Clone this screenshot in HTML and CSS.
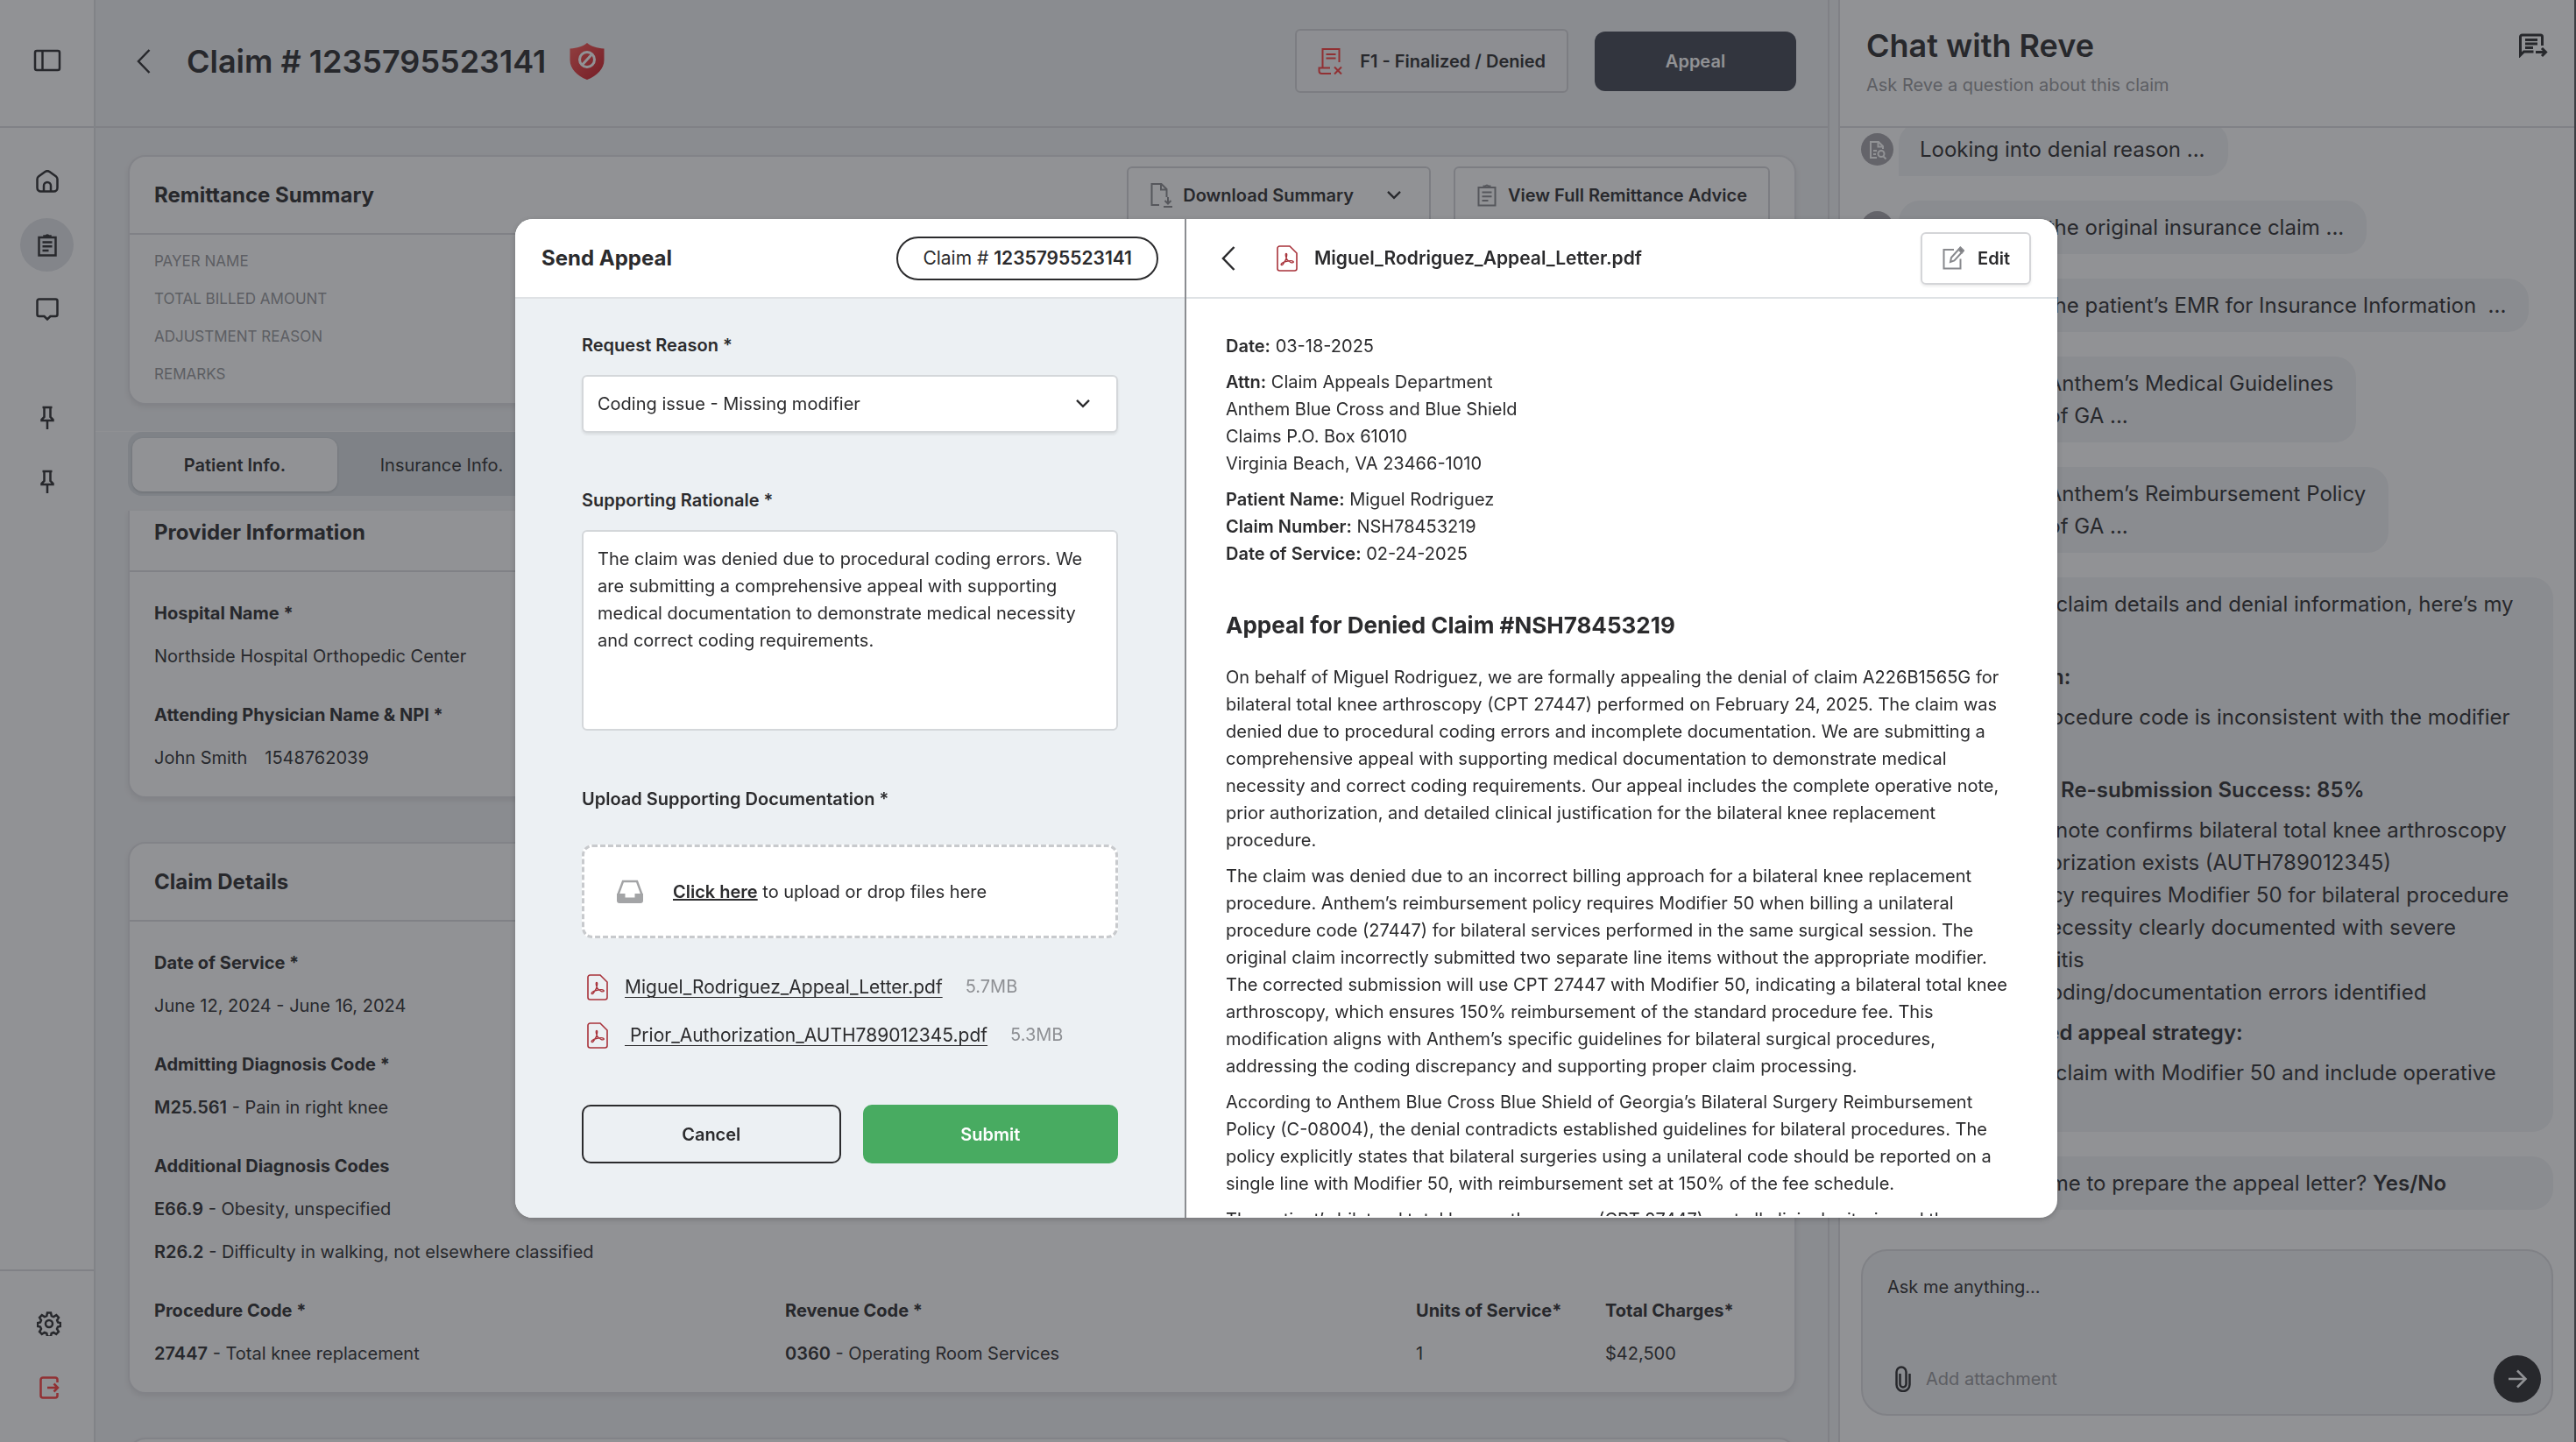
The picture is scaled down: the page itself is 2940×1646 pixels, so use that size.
FILE: index.html
```html
<!doctype html>
<html lang="en">
	<head>
		<title>Claim # 1235795523141</title>
		<meta charset="utf-8">
		<meta name="viewport" content="width=device-width">
		<link rel="stylesheet" href="styles.css">
	</head>
	<body>
		<svg class="defs" aria-hidden="true">
			<symbol id="pdf" viewBox="0 0 24 30">
				<path d="M3.500 1h11.500l8 8v17.500a2.500 2.500 0 0 1-2.500 2.500h-17a2.500 2.500 0 0 1-2.500-2.500v-23a2.500 2.500 0 0 1 2.500-2.500z" stroke-width="1.600"/>
				<path d="M5.500 22.500c-1.500-1 1-3 5-4s7.500-1 8.500 0-1 2-3 1c-3-1.500-5.500-5-5.800-8.500 0-2 1.600-2 1.500 0-.2 3.500-2.400 8-4.200 10.300-.8 1.200-1.400 1.600-2 1.200z" stroke-width="1.300"/>
			</symbol>
			<symbol id="clipboard" viewBox="0 0 24 26">
				<path d="M2.500 4h19v20.500h-19zM8.500 4v-1.500h2a1.600 1.600 0 0 1 3 0h2v1.500M6.500 9.500h11M6.500 14.200h11M6.500 19h7"/>
			</symbol>
			<symbol id="pin" viewBox="0 0 16 28">
				<path d="M2.500 2h11M4.500 2v11l-3 3v1h13v-1l-3-3v-11M8 17v10"/>
			</symbol>
			<symbol id="down" viewBox="0 0 16 12">
				<path d="M2 2.500l6 6 6-6"/>
			</symbol>
			<symbol id="back" viewBox="0 0 18 30">
				<path d="M15.500 2l-12.500 13 12.500 13"/>
			</symbol>
			<symbol id="search-doc" viewBox="0 0 24 24">
				<path d="M11 21h-7v-18h9l5 5v3M12.500 3v5.500h5M7 13h4M7 17h3M16 20a3.500 3.500 0 1 0 0-7 3.500 3.500 0 0 0 0 7zM18.500 19.500l3 3"/>
			</symbol>
		</svg>

		<nav class="sidebar">
			<div class="sidebar-top">
				<button class="nav-item" aria-label="Toggle sidebar">
					<svg width="32" height="26" viewBox="0 0 32 26"><rect x="2" y="2" width="28" height="22" rx="2"/><path d="M10.500 2v22"/></svg>
				</button>
			</div>
			<div class="sidebar-links">
				<a class="nav-item" href="#" aria-label="Home">
					<svg width="26" height="26" viewBox="0 0 26 26"><path d="M1.500 10.500c0-1.500.6-2.500 1.700-3.300l7.300-5.200a4.300 4.300 0 0 1 5 0l7.300 5.200c1.100.8 1.700 1.800 1.700 3.300v10a4 4 0 0 1-4 4h-15a4 4 0 0 1-4-4zM9 24.500v-6.500a4 4 0 0 1 8 0v6.500"/></svg>
				</a>
				<a class="nav-item active" href="#" aria-label="Claims">
					<svg width="24" height="26"><use href="#clipboard"/></svg>
				</a>
				<a class="nav-item" href="#" aria-label="Messages">
					<svg width="26" height="26" viewBox="0 0 26 26"><path d="M3.500 1.500h19a2 2 0 0 1 2 2v15.500a2 2 0 0 1-2 2h-6l-3.500 3.500-3.500-3.500h-6a2 2 0 0 1-2-2v-15.500a2 2 0 0 1 2-2z"/></svg>
				</a>
				<div class="pins">
					<a class="nav-item" href="#" aria-label="Pinned claim"><svg width="16" height="28"><use href="#pin"/></svg></a>
					<a class="nav-item" href="#" aria-label="Pinned claim"><svg width="16" height="28"><use href="#pin"/></svg></a>
				</div>
			</div>
			<div class="sidebar-bottom">
				<a class="nav-item" href="#" aria-label="Settings">
					<svg width="28" height="28" viewBox="0 0 28 28"><circle cx="14" cy="14" r="4"/><path d="M12 1.500h4l.8 3.600 2.300 1 3.200-1.900 2.700 2.800-1.900 3.100 1 2.300 2.900.6v3.900l-3 .7-1 2.400 1.900 3-2.700 2.800-3.100-1.900-2.400 1-.7 3.600h-4l-.7-3.600-2.400-1-3.100 1.900-2.700-2.800 1.900-3-1-2.400-3-.7v-3.900l3-.6 1-2.300-1.900-3.100 2.700-2.800 3.100 1.900 2.400-1z"/></svg>
				</a>
				<a class="nav-item logout" href="#" aria-label="Log out">
					<svg width="24" height="26" viewBox="0 0 24 26"><path d="M21.500 7v-3a2.500 2.500 0 0 0-2.500-2.500h-14a2.500 2.500 0 0 0-2.500 2.500v18a2.500 2.500 0 0 0 2.500 2.500h14a2.500 2.500 0 0 0 2.500-2.500v-3M10 13h12M17.500 8.500l4.500 4.500-4.500 4.500"/></svg>
				</a>
			</div>
		</nav>

		<main class="main">
			<header class="main-header">
				<button class="icon-button" aria-label="Back"><svg width="18" height="30"><use href="#back"/></svg></button>
				<h1>Claim # 1235795523141</h1>
				<svg class="shield" width="42" height="44" viewBox="0 0 42 44">
					<defs><linearGradient id="red" x1="0" y1="0" x2="1" y2="1"><stop offset="0" stop-color="#ff5a55"/><stop offset="1" stop-color="#c81420"/></linearGradient></defs>
					<path d="M21 1c5 4 11 6 19.500 6.500v13c0 10-8 18-19.500 22.500-11.500-4.500-19.500-12.500-19.500-22.500v-13c8.500-.5 14.500-2.500 19.500-6.500z" fill="url(#red)"/>
					<circle cx="21" cy="20" r="8.500" fill="none" stroke="#fff" stroke-width="3"/>
					<path d="M15.500 26l11-12" stroke="#fff" stroke-width="3"/>
				</svg>
				<button class="button status">
					<svg width="28" height="32" viewBox="0 0 28 32"><path d="M5.500 23v-21h19v15M9.500 8h11M9.500 12.500h11M14 23.500h-12.500v3.500a3 3 0 0 0 3 3h10.500M19 22.500l8 8M27 22.500l-8 8"/></svg>
					F1 - Finalized / Denied
				</button>
				<button class="button appeal">Appeal</button>
			</header>

			<div class="content">
				<section class="card">
					<header class="card-header">
						<h2>Remittance Summary</h2>
						<button class="button">
							<svg width="26" height="30" viewBox="0 0 26 30"><path d="M11 26h-8.500v-24h11l6 6v9M13 2v6.500h6M21 17v7M17.500 21l3.500 3.500 3.500-3.500M16 28h10"/></svg>
							Download Summary
							<svg class="dark" width="20" height="14"><use href="#down"/></svg>
						</button>
						<button class="button">
							<svg width="24" height="26"><use href="#clipboard"/></svg>
							View Full Remittance Advice
						</button>
					</header>
					<ul class="summary">
						<li>PAYER NAME</li>
						<li>TOTAL BILLED AMOUNT</li>
						<li>ADJUSTMENT REASON</li>
						<li>REMARKS</li>
					</ul>
				</section>

				<div class="tabs-bar">
					<div class="tabs">
						<button class="tab selected">Patient Info.</button>
						<button class="tab">Insurance Info.</button>
					</div>
				</div>

				<section class="card scrolled">
					<header class="card-header"><h2>Provider Information</h2></header>
					<dl class="fields">
						<div>
							<dt>Hospital Name *</dt>
							<dd>Northside Hospital Orthopedic Center</dd>
						</div>
						<div>
							<dt>Attending Physician Name &amp; NPI *</dt>
							<dd class="pair"><span>John Smith</span><span>1548762039</span></dd>
						</div>
					</dl>
				</section>

				<section class="card">
					<header class="card-header"><h2>Claim Details</h2></header>
					<dl class="fields">
						<div>
							<dt>Date of Service *</dt>
							<dd>June 12, 2024 - June 16, 2024</dd>
						</div>
						<div>
							<dt>Admitting Diagnosis Code *</dt>
							<dd><b>M25.561</b> - Pain in right knee</dd>
						</div>
						<div>
							<dt>Additional Diagnosis Codes</dt>
							<dd><b>E66.9</b> - Obesity, unspecified</dd>
							<dd><b>R26.2</b> - Difficulty in walking, not elsewhere classified</dd>
						</div>
					</dl>
					<table class="procedures">
						<thead>
							<tr><th>Procedure Code *</th><th>Revenue Code *</th><th class="narrow">Units of Service*</th><th class="narrow">Total Charges*</th></tr>
						</thead>
						<tbody>
							<tr><td><b>27447</b> - Total knee replacement</td><td><b>0360</b> - Operating Room Services</td><td>1</td><td>$42,500</td></tr>
						</tbody>
					</table>
				</section>

				<section class="card">
					<header class="card-header"></header>
				</section>
			</div>
		</main>

		<aside class="chat">
			<header class="chat-header">
				<div>
					<h2>Chat with Reve</h2>
					<p>Ask Reve a question about this claim</p>
				</div>
				<button class="icon-button" aria-label="Move chat">
					<svg width="34" height="28" viewBox="0 0 34 28"><path d="M27.500 14v-10a2 2 0 0 0-2-2h-21a2 2 0 0 0-2 2v21l4-4h11M8 7.500h14M8 12h14M8 16.500h9M20 21.500h11M27 17l4.500 4.500-4.500 4.500"/></svg>
				</button>
			</header>
			<div class="messages">
				<div class="message">
					<span class="avatar"><svg width="24" height="24"><use href="#search-doc"/></svg></span>
					<p class="bubble">Looking into denial reason ...</p>
				</div>
				<div class="message">
					<span class="avatar"><svg width="24" height="24"><use href="#search-doc"/></svg></span>
					<p class="bubble">Looking into the original insurance claim ...</p>
				</div>
				<div class="message">
					<span class="avatar"><svg width="24" height="24"><use href="#search-doc"/></svg></span>
					<p class="bubble">Looking into the patient’s EMR for Insurance Information &nbsp;...</p>
				</div>
				<div class="message">
					<span class="avatar"><svg width="24" height="24"><use href="#search-doc"/></svg></span>
					<p class="bubble">Looking into Anthem’s Medical Guidelines<br>for the State of GA ...</p>
				</div>
				<div class="message">
					<span class="avatar"><svg width="24" height="24"><use href="#search-doc"/></svg></span>
					<p class="bubble">Looking into Anthem’s Reimbursement Policy<br>for the State of GA ...</p>
				</div>
				<div class="message">
					<span class="avatar"><svg width="24" height="24"><use href="#search-doc"/></svg></span>
					<div class="bubble report">
						<p>Based on the claim details and denial information, here’s my<br>analysis.</p>
						<p><b>Denial Reason:</b></p>
						<p>CO-4: The procedure code is inconsistent with the modifier<br>used.</p>
						<p><b>Probability of Re-submission Success: 85%</b></p>
						<ul>
							<li>Operative note confirms bilateral total knee arthroscopy</li>
							<li>Prior authorization exists (AUTH789012345)</li>
							<li>Payer policy requires Modifier 50 for bilateral procedure</li>
							<li>Medical necessity clearly documented with severe<br>osteoarthritis</li>
							<li>Multiple coding/documentation errors identified</li>
						</ul>
						<p><b>Recommended appeal strategy:</b></p>
						<p>Resubmit the claim with Modifier 50 and include operative<br>note.</p>
					</div>
				</div>
				<div class="message">
					<span class="avatar"><svg width="24" height="24"><use href="#search-doc"/></svg></span>
					<p class="bubble report">Do you want me to prepare the appeal letter? <b>Yes/No</b></p>
				</div>
			</div>
			<form class="composer">
				<input type="text" placeholder="Ask me anything..." aria-label="Ask me anything">
				<div class="composer-actions">
					<button class="attach" type="button">
						<svg width="18" height="30" viewBox="0 0 18 30"><path d="M16.500 9v12.500a7.500 7.500 0 0 1-15 0v-14.500a5.500 5.500 0 0 1 11 0v14a3.500 3.500 0 0 1-7 0v-12"/></svg>
						Add attachment
					</button>
					<button class="send" type="button" aria-label="Send">
						<svg width="24" height="24" viewBox="0 0 24 24"><path d="M2 12h19M12 2.500l9.500 9.500-9.500 9.500"/></svg>
					</button>
				</div>
			</form>
		</aside>

		<div class="overlay">
			<div class="modal" role="dialog" aria-label="Send Appeal">
				<form class="appeal-form">
					<header class="modal-header">
						<h2>Send Appeal</h2>
						<span class="pill">Claim # <b>1235795523141</b></span>
					</header>
					<div class="form-body">
						<label for="reason">Request Reason *</label>
						<div class="select">
							<select id="reason"><option>Coding issue - Missing modifier</option></select>
							<svg width="20" height="14"><use href="#down"/></svg>
						</div>
						<label for="rationale">Supporting Rationale *</label>
						<textarea id="rationale" rows="6">The claim was denied due to procedural coding errors. We are submitting a comprehensive appeal with supporting medical documentation to demonstrate medical necessity and correct coding requirements.</textarea>
						<h3>Upload Supporting Documentation *</h3>
						<div class="dropzone">
							<svg width="32" height="28" viewBox="0 0 32 28"><path d="M2.500 17l5.500-15h16l5.500 15" fill="none" stroke="#a3a4a6" stroke-width="2.500"/><path d="M1 16h9.500v4.500h11v-4.500h9.500v8a3 3 0 0 1-3 3h-24a3 3 0 0 1-3-3z" fill="#a3a4a6"/></svg>
							<p><a href="#"><b>Click here</b></a> to upload or drop files here</p>
						</div>
						<ul class="files">
							<li><svg class="pdf" width="24" height="30"><use href="#pdf"/></svg><a href="#">Miguel_Rodriguez_Appeal_Letter.pdf</a><span>5.7MB</span></li>
							<li><svg class="pdf" width="24" height="30"><use href="#pdf"/></svg><a href="#">&nbsp;Prior_Authorization_AUTH789012345.pdf</a><span>5.3MB</span></li>
						</ul>
						<div class="form-buttons">
							<button class="cancel" type="button">Cancel</button>
							<button class="submit" type="button">Submit</button>
						</div>
					</div>
				</form>

				<section class="letter">
					<header class="modal-header">
						<button class="icon-button" aria-label="Back"><svg width="18" height="30"><use href="#back"/></svg></button>
						<svg class="pdf" width="24" height="30"><use href="#pdf"/></svg>
						<h3>Miguel_Rodriguez_Appeal_Letter.pdf</h3>
						<button class="button edit">
							<svg width="26" height="28" viewBox="0 0 26 28"><path d="M14 4h-11.500v21.500h19v-11M10 18l1-5 10-11 3.500 3.500-10 11z"/><path d="M19.500 4l2-2.500 3.500 3.500-2 2.500z" fill="#77787c"/></svg>
							Edit
						</button>
					</header>
					<div class="letter-body">
						<p><b>Date:</b> 03-18-2025</p>
						<p><b>Attn:</b> Claim Appeals Department<br>Anthem Blue Cross and Blue Shield<br>Claims P.O. Box 61010<br>Virginia Beach, VA 23466-1010</p>
						<p><b>Patient Name:</b> Miguel Rodriguez<br><b>Claim Number:</b> NSH78453219<br><b>Date of Service:</b> 02-24-2025</p>
						<h2>Appeal for Denied Claim #NSH78453219</h2>
						<p>On behalf of Miguel Rodriguez, we are formally appealing the denial of claim A226B1565G for<br>bilateral total knee arthroscopy (CPT 27447) performed on February 24, 2025. The claim was<br>denied due to procedural coding errors and incomplete documentation. We are submitting a<br>comprehensive appeal with supporting medical documentation to demonstrate medical<br>necessity and correct coding requirements. Our appeal includes the complete operative note,<br>prior authorization, and detailed clinical justification for the bilateral knee replacement<br>procedure.</p>
						<p>The claim was denied due to an incorrect billing approach for a bilateral knee replacement<br>procedure. Anthem’s reimbursement policy requires Modifier 50 when billing a unilateral<br>procedure code (27447) for bilateral services performed in the same surgical session. The<br>original claim incorrectly submitted two separate line items without the appropriate modifier.<br>The corrected submission will use CPT 27447 with Modifier 50, indicating a bilateral total knee<br>arthroscopy, which ensures 150% reimbursement of the standard procedure fee. This<br>modification aligns with Anthem’s specific guidelines for bilateral surgical procedures,<br>addressing the coding discrepancy and supporting proper claim processing.</p>
						<p>According to Anthem Blue Cross Blue Shield of Georgia’s Bilateral Surgery Reimbursement<br>Policy (C-08004), the denial contradicts established guidelines for bilateral procedures. The<br>policy explicitly states that bilateral surgeries using a unilateral code should be reported on a<br>single line with Modifier 50, with reimbursement set at 150% of the fee schedule.</p>
						<p>The patient’s bilateral total knee arthroscopy (CPT 27447) met all clinical criteria and the</p>
					</div>
				</section>
			</div>
		</div>
	</body>
</html>
```
FILE: styles.css
```css
* {
	box-sizing: border-box;
}
html, body {
	height: 100%;
	margin: 0;
	padding: 0;
}
body {
	display: flex;
	overflow: hidden;
	background: #f1f2f4;
	color: #2b2b2d;
	font-family: Inter, "Liberation Sans", sans-serif;
	font-size: 20px;
	line-height: 30px;
}
h1, h2, h3, p, ul, dl, dd {
	margin: 0;
	padding: 0;
}
ul {
	list-style: none;
}
h1 {
	font-size: 36px;
	font-weight: 600;
}
h2 {
	font-size: 24px;
	font-weight: 700;
}
h3 {
	font-size: 20px;
	font-weight: 600;
}
b {
	font-weight: 600;
}
a {
	color: inherit;
}
button, input, select, textarea {
	font: inherit;
	color: inherit;
}
button {
	padding: 0;
	border: 0;
	background: none;
}
svg {
	flex: none;
	fill: none;
	stroke: currentColor;
	stroke-width: 2.5;
}
.defs {
	position: absolute;
	width: 0;
	height: 0;
}
.shield {
	stroke: none;
}
.pdf {
	color: #a8323a;
}
.icon-button {
	display: flex;
}

/* sidebar */
.sidebar {
	display: flex;
	flex-direction: column;
	width: 109px;
	flex: none;
	background: #fff;
	border-right: 2px solid #dfe0e3;
}
.sidebar-top {
	display: flex;
	align-items: center;
	justify-content: center;
	height: 146px;
	padding-bottom: 6px;
	border-bottom: 2px solid #dcdde0;
}
.sidebar-links, .sidebar-bottom, .pins {
	display: flex;
	flex-direction: column;
	align-items: center;
	gap: 12px;
}
.sidebar-links {
	flex: 1;
	padding-top: 30px;
}
.pins {
	margin-top: 51px;
}
.sidebar-bottom {
	padding: 29px 0 32px 4px;
	border-top: 2px solid #dcdde0;
}
.nav-item {
	display: flex;
	align-items: center;
	justify-content: center;
	width: 61px;
	height: 61px;
	border-radius: 50%;
}
.nav-item.active {
	background: #e2e4e8;
}
.logout {
	color: #ff3b3b;
}

/* main */
.main {
	flex: 1;
	min-width: 0;
	overflow: hidden;
	border-right: 2px solid #dcdde0;
}
.main-header {
	display: flex;
	align-items: center;
	height: 146px;
	padding: 0 36px 5px 46px;
	border-bottom: 2px solid #dcdde0;
}
.main-header h1 {
	margin: 0 26px 0 40px;
}
.button {
	display: flex;
	align-items: center;
	gap: 12px;
	height: 66px;
	padding: 0 24px;
	border: 2px solid #d4d5d8;
	border-radius: 6px;
	font-weight: 600;
}
.button svg {
	color: #88898d;
	stroke-width: 2;
}
.button .dark {
	margin: 0 6px 0 24px;
	color: inherit;
}
.status {
	gap: 20px;
	height: 73px;
	margin-left: auto;
	background: #f6f7f8;
}
.status svg {
	color: #ff3b3b;
}
.appeal {
	justify-content: center;
	width: 230px;
	height: 68px;
	margin-left: 30px;
	border: 0;
	border-radius: 12px;
	background: #414551;
	color: #fff;
}
.content {
	padding: 31px 36px 0 37px;
}
.card {
	border: 2px solid #e0e1e4;
	border-radius: 20px;
	background: #fff;
	box-shadow: 0 3px 6px rgba(0, 0, 0, .08);
}
.card-header {
	display: flex;
	align-items: center;
	gap: 26px;
	height: 89px;
	padding: 0 28px;
	border-bottom: 2px solid #dcdde0;
}
.card-header h2 {
	margin-right: auto;
}
.summary {
	padding: 9px 28px 11px;
	color: #96979a;
	font-size: 17px;
	line-height: 43px;
}
.tabs-bar {
	margin: 30px -36px 0 -37px;
	padding: 0 36px 0 37px;
	border-top: 1px solid #fafafa;
}
.tabs {
	display: flex;
	gap: 2px;
	padding: 7px 5px 5px;
	border-radius: 16px;
	background: #dadfe3;
}
.tab {
	width: 234px;
	height: 61px;
	border-radius: 12px;
}
.tab.selected {
	background: #fff;
	box-shadow: 0 1px 3px rgba(0, 0, 0, .2);
	font-weight: 600;
}
.card.scrolled {
	margin: 17px 0 50px;
	border-top: 0;
	border-radius: 0 0 20px 20px;
}
.scrolled .card-header {
	height: 70px;
	padding-bottom: 18px;
}
.fields {
	display: flex;
	flex-direction: column;
	gap: 37px;
	padding: 32px 28px 29px;
}
.fields > div {
	display: flex;
	flex-direction: column;
	gap: 19px;
}
dt, th {
	font-weight: 700;
}
.pair {
	display: flex;
	gap: 20px;
}
.procedures {
	width: 100%;
	table-layout: fixed;
	border-spacing: 0;
	margin-top: 8px;
	padding: 0 0 29px 28px;
}
.procedures th, .procedures td {
	padding: 0;
	text-align: left;
}
.procedures td {
	padding-top: 19px;
}
.procedures .narrow {
	width: 216px;
}
.card + .card {
	margin-top: 50px;
}

/* chat */
.chat {
	display: flex;
	flex-direction: column;
	flex: none;
	width: 842px;
	margin-left: 10px;
	border-left: 2px solid #dcdde0;
	border-right: 2px solid #55565b;
	background: #fff;
}
.chat-header {
	display: flex;
	justify-content: space-between;
	height: 146px;
	flex: none;
	padding: 30px 30px 0 30px;
	border-bottom: 2px solid #dcdde0;
}
.chat-header h2 {
	font-size: 36px;
	font-weight: 600;
	line-height: 45px;
}
.chat-header p {
	margin-top: 7px;
	color: #96979a;
}
.chat-header .icon-button {
	margin-top: 8px;
	height: 28px;
}
.chat-header svg {
	stroke-width: 3;
}
.messages {
	display: flex;
	flex: 1;
	flex-direction: column;
	justify-content: flex-end;
	gap: 28px;
	min-height: 0;
	overflow: hidden;
	padding: 0 24px 45px;
	font-size: 24px;
	line-height: 37px;
	white-space: nowrap;
}
.message {
	display: flex;
	gap: 6px;
}
.avatar {
	display: flex;
	align-items: center;
	justify-content: center;
	flex: none;
	width: 37px;
	height: 37px;
	margin-top: 12px;
	border-radius: 50%;
	background: #a4a2a8;
	color: #fff;
}
.avatar svg {
	stroke-width: 2;
}
.bubble {
	padding: 12px 26px 12px 24px;
	border-radius: 24px 24px 24px 0;
	background: #f1f2f4;
}
.report {
	display: flex;
	flex: 1;
	flex-direction: column;
	gap: 9px;
	min-width: 0;
	border-radius: 24px;
}
p.report {
	display: block;
}
.report ul {
	padding-left: 38px;
	list-style: disc;
}
.composer {
	margin: 0 24px 30px;
	padding: 26px 12px 13px 28px;
	border: 2px solid #dcdde0;
	border-radius: 30px;
	background: #f1f2f4;
}
.composer input {
	width: 100%;
	padding: 0;
	border: 0;
	background: none;
	line-height: 30px;
}
.composer input::placeholder {
	color: inherit;
	opacity: 1;
}
.composer-actions {
	display: flex;
	align-items: center;
	justify-content: space-between;
	margin-top: 63px;
}
.attach {
	display: flex;
	align-items: center;
	gap: 17px;
	padding-left: 9px;
	color: #96979a;
}
.attach svg {
	color: #2b2b2d;
}
.send {
	display: flex;
	align-items: center;
	justify-content: center;
	width: 54px;
	height: 54px;
	border-radius: 50%;
	background: #2b2b2d;
	color: #fff;
}

/* modal */
.overlay {
	position: fixed;
	top: 0;
	right: 0;
	bottom: 0;
	left: 0;
	display: flex;
	align-items: center;
	justify-content: center;
	padding: 0 4px 6px 0;
	background: rgba(36, 38, 44, .5);
}
.modal {
	display: flex;
	width: 1760px;
	max-width: 90vw;
	border-radius: 20px;
	background: #fff;
	box-shadow: 0 2px 6px rgba(0, 0, 0, .2);
	overflow: hidden;
}
.modal-header {
	display: flex;
	align-items: center;
	flex: none;
	height: 91px;
	padding: 0 30px;
	border-bottom: 2px solid #dfe2e5;
	background: #fff;
}
.modal-header h2 {
	margin-right: auto;
}
.appeal-form {
	flex: 0 0 766px;
	background: #ecf0f3;
	border-right: 2px solid #8b8d91;
}
.pill {
	padding: 8px 28px;
	border: 2px solid #2b2b2d;
	border-radius: 25px;
	font-size: 21px;
}
.form-body {
	display: flex;
	flex-direction: column;
	padding: 38px 76px 62px;
}
.form-body label, .form-body h3 {
	margin-bottom: 19px;
	font-weight: 600;
}
.form-body h3 {
	margin-bottom: 37px;
}
.select {
	position: relative;
	margin-bottom: 62px;
}
.select svg {
	position: absolute;
	top: 26px;
	right: 30px;
	stroke-width: 2;
	pointer-events: none;
}
select, textarea {
	display: block;
	width: 100%;
	border: 2px solid #d4d7da;
	border-radius: 6px;
	background: #fff;
	appearance: none;
}
select {
	height: 66px;
	padding: 0 16px;
	box-shadow: 0 2px 3px rgba(0, 0, 0, .08);
}
textarea {
	height: 229px;
	margin-bottom: 63px;
	padding: 16px;
	line-height: 31px;
	resize: none;
	overflow: hidden;
}
.dropzone {
	display: flex;
	align-items: center;
	gap: 33px;
	height: 107px;
	padding-left: 36px;
	border: 3px dashed #c8cacd;
	border-radius: 12px;
	background: #fff;
}
.dropzone svg {
	stroke: none;
}
.files {
	margin: 28px 0 52px;
	line-height: 55px;
}
.files li {
	display: flex;
	align-items: center;
	padding-left: 6px;
}
.files a {
	margin: 0 26px 0 19px;
	font-size: 21px;
	text-decoration-thickness: 1px;
	text-underline-offset: 4px;
}
.files span {
	color: #8e9094;
}
.form-buttons {
	display: flex;
	gap: 25px;
}
.form-buttons button {
	flex: 1;
	height: 67px;
	border-radius: 10px;
	font-weight: 600;
}
.cancel {
	border: 2px solid #2b2b2d;
}
.submit {
	background: #48ab61;
	color: #fff;
}
.letter {
	display: flex;
	flex: 1;
	flex-direction: column;
	min-width: 0;
}
.letter .modal-header {
	padding-left: 39px;
}
.letter .pdf {
	margin: 0 19px 0 46px;
}
.letter h3 {
	margin-right: auto;
	font-size: 21px;
}
.edit {
	gap: 15px;
	height: 60px;
	padding: 0 22px;
	box-shadow: 0 2px 3px rgba(0, 0, 0, .08);
}
.letter-body {
	display: flex;
	flex: 1 1 0;
	flex-direction: column;
	gap: 10px;
	min-height: 0;
	overflow: hidden;
	margin-bottom: 2px;
	padding: 39px 0 0 45px;
	line-height: 31px;
	white-space: nowrap;
}
.letter-body > * {
	flex: none;
}
.letter-body h2 {
	margin: 38px 0 16px;
	font-size: 26px;
	line-height: 36px;
}
```
